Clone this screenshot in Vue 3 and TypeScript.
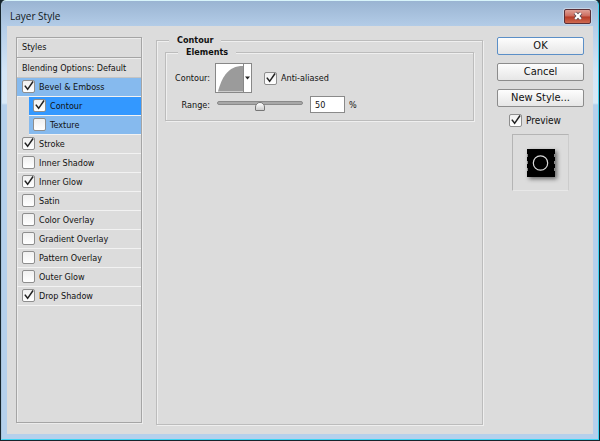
<script setup lang="ts">
import { ref } from 'vue'

interface Effect {
  id: string
  label: string
  on: boolean
  tone?: 'active' | 'current' | 'related'
}

const effects = ref<Effect[]>([
  { id: 'bevel', label: 'Bevel & Emboss', on: true, tone: 'active' },
  { id: 'contour', label: 'Contour', on: true, tone: 'current' },
  { id: 'texture', label: 'Texture', on: false, tone: 'related' },
  { id: 'stroke', label: 'Stroke', on: true },
  { id: 'inner-shadow', label: 'Inner Shadow', on: false },
  { id: 'inner-glow', label: 'Inner Glow', on: true },
  { id: 'satin', label: 'Satin', on: false },
  { id: 'color-overlay', label: 'Color Overlay', on: false },
  { id: 'gradient-overlay', label: 'Gradient Overlay', on: false },
  { id: 'pattern-overlay', label: 'Pattern Overlay', on: false },
  { id: 'outer-glow', label: 'Outer Glow', on: false },
  { id: 'drop-shadow', label: 'Drop Shadow', on: true },
])

const antiAliased = ref(true)
const preview = ref(true)
const range = ref(50)
</script>

<template>
  <div class="window">
    <header class="titlebar">
      <h1>Layer Style</h1>
      <button class="close" type="button" aria-label="Close">
        <svg viewBox="0 0 12 10" width="12" height="10">
          <path d="M3.2 2 L8.8 8 M8.8 2 L3.2 8" stroke="#5c4a52" stroke-width="4" />
          <path d="M3.2 2 L8.8 8 M8.8 2 L3.2 8" stroke="#fff" stroke-width="2.2" />
        </svg>
      </button>
    </header>

    <main class="content">
      <nav class="styles">
        <div class="head">Styles</div>
        <div class="head blending">Blending Options: Default</div>
        <ul>
          <li v-for="e in effects" :key="e.id" :class="e.tone">
            <label class="check">
              <span class="box">
                <input v-model="e.on" type="checkbox" />
                <svg v-if="e.on" viewBox="0 0 12 12"><path d="M2.6 5.2 L5.2 8.6 L10.2 1.4" /></svg>
              </span>
              {{ e.label }}
            </label>
          </li>
        </ul>
      </nav>

      <fieldset class="group outer">
        <legend>Contour</legend>
        <fieldset class="group inner">
          <legend>Elements</legend>
          <div class="row first">
            <span class="name">Contour:</span>
            <button class="swatch" type="button" aria-label="Contour">
              <svg class="curve" viewBox="0 0 28 28">
                <path d="M2 28 C4 21 6 15 10 10 C15 4 20 1.5 28 1.5 V28 Z" fill="#9b9b9b" />
              </svg>
              <svg class="arrow" viewBox="0 0 7 28"><path d="M1 12.5 H6 L3.5 15.5 Z" fill="#222" /></svg>
            </button>
            <label class="check aa">
              <span class="box">
                <input v-model="antiAliased" type="checkbox" />
                <svg v-if="antiAliased" viewBox="0 0 12 12"><path d="M2.6 5.2 L5.2 8.6 L10.2 1.4" /></svg>
              </span>
              Anti-aliased
            </label>
          </div>
          <div class="row">
            <label class="name" for="range">Range:</label>
            <input id="range" v-model.number="range" class="slider" type="range" min="0" max="100" />
            <input v-model.number="range" class="number" type="text" aria-label="Range value" />
            <span>%</span>
          </div>
        </fieldset>
      </fieldset>

      <aside class="actions">
        <button class="btn default" type="button">OK</button>
        <button class="btn" type="button">Cancel</button>
        <button class="btn" type="button">New Style...</button>
        <label class="check preview">
          <span class="box">
            <input v-model="preview" type="checkbox" />
            <svg v-if="preview" viewBox="0 0 12 12"><path d="M2.6 5.2 L5.2 8.6 L10.2 1.4" /></svg>
          </span>
          Preview
        </label>
        <div class="thumb">
          <svg viewBox="0 0 30 30" width="30" height="30">
            <rect x="1" y="1" width="28" height="28" fill="#000" />
            <path d="M1.5 6v3M1.5 13v3M1.5 20v3M28.5 6v3M28.5 13v3M28.5 20v3" stroke="#888" />
            <circle cx="14.5" cy="15" r="7.2" fill="none" stroke="#dcdcdc" stroke-width="1.2" />
          </svg>
        </div>
      </aside>
    </main>
  </div>
</template>

<style>
body {
  background: #16242c;
}
</style>

<style scoped>
* {
  box-sizing: border-box;
}

.window {
  display: flex;
  flex-direction: column;
  height: calc(100vh - 1px);
  margin: 0 1px;
  padding: 0 5px 5px;
  border: 1px solid #3fd4f2;
  border-top-color: #d8f4fa;
  border-left-color: #a9c4dc;
  border-radius: 5px 5px 0 0;
  background: linear-gradient(#9ab4d2 0, #b4cde8 26px, #d3e5f6 70px, #d9e9f7 102px, #b5d0ec 104px, #b5d0ec 100%);
  font: 9px/12px "DejaVu Sans Condensed", "DejaVu Sans", sans-serif;
  color: #111;
}

.titlebar {
  display: flex;
  align-items: center;
  justify-content: space-between;
  height: 25px;
  padding: 5px 2px 0 3px;
}

h1 {
  margin: 0;
  font: 10px/16px "Open Sans", sans-serif;
  color: #101820;
}

.close {
  display: flex;
  align-items: center;
  justify-content: center;
  width: 27px;
  height: 15px;
  padding: 0;
  border: 1px solid #5c3038;
  border-radius: 2px;
  background: linear-gradient(#dfa096, #cc6a5c 48%, #b53a26 52%, #cf6a50);
  box-shadow: 0 0 0 1px #c5d4e4;
}

.content {
  display: flex;
  flex: 1;
  align-items: stretch;
  padding: 11px 9px 9px;
  background: #dcdcdc;
}

.styles {
  width: 126px;
  margin-bottom: 2px;
  border: 1px solid #a5a5a5;
  box-shadow: 1px 1px #ececec, inset 1px 1px #ececec;
}

.head {
  height: 20px;
  padding: 0 5px;
  border-bottom: 1px solid #a5a5a5;
  line-height: 18px;
}

.blending {
  border-top: 1px solid #eee;
  border-bottom-color: #c4c4c4;
}

ul {
  margin: 0;
  padding: 0;
  list-style: none;
}

li {
  display: flex;
  align-items: center;
  height: 19px;
  padding: 0 0 1px 5px;
  border-bottom: 1px solid #f2f2f2;
}

.active {
  background: #86baee;
}

.current,
.related {
  margin-left: 12px;
  padding-left: 4px;
}

.current {
  background: #3398ff;
}

.related {
  background: #86baee;
}

.check {
  display: flex;
  align-items: center;
  gap: 4px;
}

.box {
  display: grid;
  width: 13px;
  height: 13px;
}

.box > * {
  grid-area: 1 / 1;
}

.box input {
  width: 13px;
  height: 13px;
  margin: 0;
  appearance: none;
  border: 1px solid #8e8e8e;
  border-radius: 2px;
  background: linear-gradient(#f0f0f0, #fff);
}

.box svg {
  width: 13px;
  height: 13px;
  pointer-events: none;
}

.box path {
  fill: none;
  stroke: #222;
  stroke-width: 1.4;
}

.group {
  min-width: 0;
  margin: 0;
  border: 1px solid #bcbcbc;
  box-shadow: 1px 1px #efefef, inset 1px 1px #efefef;
}

.group legend {
  margin-left: 4px;
  padding: 0 8px;
  background: #dcdcdc;
  font-weight: bold;
  line-height: 12px;
}

.outer {
  flex: 1;
  margin: -3px 14px 0 14px;
  padding: 0 8px;
}

.inner {
  padding: 5px 8px 7px;
}

.row {
  display: flex;
  align-items: center;
}

.first {
  margin-bottom: 3px;
}

.name {
  width: 36px;
  margin-right: 5px;
  text-align: right;
}

.swatch {
  display: flex;
  width: 37px;
  height: 30px;
  padding: 0;
  border: 1px solid #888;
  background: #fff;
}

.curve {
  width: 28px;
  height: 28px;
  border-right: 1px solid #888;
}

.arrow {
  width: 7px;
  height: 28px;
}

.aa {
  margin-left: 12px;
}

.slider {
  width: 86px;
  height: 16px;
  margin: 0 7px 0 2px;
  appearance: none;
  background: transparent;
}

.slider::-webkit-slider-runnable-track {
  height: 4px;
  margin-bottom: 4px;
  border: 1px solid #8a8a8a;
  border-radius: 2px;
  background: #a8a8a8;
}

.slider::-webkit-slider-thumb {
  width: 10px;
  height: 9px;
  margin-top: 0;
  appearance: none;
  background: linear-gradient(#fff, #ccc);
  border: 1px solid #777;
  border-radius: 5px 5px 1px 1px;
}

.number {
  width: 35px;
  height: 17px;
  margin-right: 4px;
  padding: 0 4px;
  border: 1px solid #8a8a8a;
  background: #fff;
  font: inherit;
  color: inherit;
}

.actions {
  display: flex;
  flex-direction: column;
  align-items: center;
  width: 87px;
}

.btn {
  width: 100%;
  height: 18px;
  margin-bottom: 8px;
  padding: 0;
  border: 1px solid #8c8c8c;
  border-radius: 2px;
  background: linear-gradient(#fdfdfd, #e6e6e6);
  font: 11px/14px "DejaVu Sans Condensed", "DejaVu Sans", sans-serif;
  color: #111;
}

.default {
  border-color: #5b8fc7;
}

.preview {
  align-self: flex-start;
  margin: -1px 0 0 12px;
  font-size: 10px;
}

.thumb {
  display: grid;
  place-items: center;
  width: 57px;
  height: 57px;
  margin-top: 7px;
  border: 1px solid;
  border-color: #b4b4b4 #ccc #e8e8e8 #b4b4b4;
}

.thumb svg {
  filter: drop-shadow(2px 2px 2px #666);
}
</style>
